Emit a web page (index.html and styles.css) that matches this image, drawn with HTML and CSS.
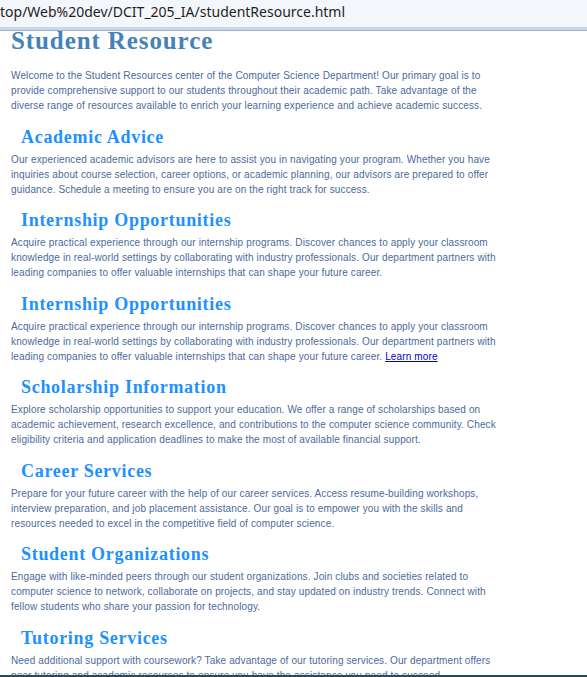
FILE: index.html
```html
<!DOCTYPE html>
<html lang="en">
<head>
<meta charset="utf-8">
<title>Student Resource</title>
<link rel="stylesheet" href="styles.css">
</head>
<body>
<div class="addressbar"><span class="url">top/Web%20dev/DCIT_205_IA/studentResource.html</span></div>
<main class="page">
  <h1 class="title">Student Resource</h1>
  <p class="text">Welcome to the Student Resources center of the Computer Science Department! Our primary goal is to provide comprehensive support to our students throughout their academic path. Take advantage of the diverse range of resources available to enrich your learning experience and achieve academic success.</p>

  <section class="block">
    <h2 class="heading">Academic Advice</h2>
    <p class="text">Our experienced academic advisors are here to assist you in navigating your program. Whether you have inquiries about course selection, career options, or academic planning, our advisors are prepared to offer guidance. Schedule a meeting to ensure you are on the right track for success.</p>
  </section>

  <section class="block">
    <h2 class="heading">Internship Opportunities</h2>
    <p class="text">Acquire practical experience through our internship programs. Discover chances to apply your classroom knowledge in real-world settings by collaborating with industry professionals. Our department partners with leading companies to offer valuable internships that can shape your future career.</p>
  </section>

  <section class="block">
    <h2 class="heading">Internship Opportunities</h2>
    <p class="text">Acquire practical experience through our internship programs. Discover chances to apply your classroom knowledge in real-world settings by collaborating with industry professionals. Our department partners with leading companies to offer valuable internships that can shape your future career. <a class="more" href="#">Learn more</a></p>
  </section>

  <section class="block">
    <h2 class="heading">Scholarship Information</h2>
    <p class="text">Explore scholarship opportunities to support your education. We offer a range of scholarships based on academic achievement, research excellence, and contributions to the computer science community. Check eligibility criteria and application deadlines to make the most of available financial support.</p>
  </section>

  <section class="block">
    <h2 class="heading">Career Services</h2>
    <p class="text">Prepare for your future career with the help of our career services. Access resume-building workshops, interview preparation, and job placement assistance. Our goal is to empower you with the skills and resources needed to excel in the competitive field of computer science.</p>
  </section>

  <section class="block">
    <h2 class="heading">Student Organizations</h2>
    <p class="text">Engage with like-minded peers through our student organizations. Join clubs and societies related to computer science to network, collaborate on projects, and stay updated on industry trends. Connect with fellow students who share your passion for technology.</p>
  </section>

  <section class="block">
    <h2 class="heading">Tutoring Services</h2>
    <p class="text">Need additional support with coursework? Take advantage of our tutoring services. Our department offers peer tutoring and academic resources to ensure you have the assistance you need to succeed.</p>
  </section>
</main>
<div class="taskbar"></div>
</body>
</html>
```
FILE: styles.css
```css
html, body {
  margin: 0;
  padding: 0;
  background: #ffffff;
}

body {
  overflow: hidden;
  height: 677px;
}

.addressbar {
  height: 27px;
  background: #f3f6fb;
  border-bottom: 3px solid #c8d7f0;
  box-shadow: 0 1px 0 #9fb0c8;
  display: flex;
  align-items: center;
}

.url {
  margin-left: 0;
  font-family: "Noto Sans", "Open Sans", sans-serif;
  font-size: 14px;
  color: #1f1f1f;
  white-space: nowrap;
  position: relative;
  top: -2px;
}

.page {
  padding: 1px 0 0 11px;
  width: 492px;
}

.title {
  margin: 0;
  font-family: "Liberation Serif", "Times New Roman", serif;
  font-weight: bold;
  font-size: 25px;
  line-height: 20px;
  letter-spacing: 0.9px;
  color: #4682b4;
}

.text {
  margin: 17px 0 0 0;
  font-family: "Liberation Sans", Arial, sans-serif;
  font-size: 10px;
  line-height: 15px;
  letter-spacing: 0.13px;
  color: #4b6a9b;
}

.block {
  margin-top: 13.5px;
}

.heading {
  margin: 0 0 0 10px;
  font-family: "Liberation Serif", "Times New Roman", serif;
  font-weight: bold;
  font-size: 18px;
  line-height: 20px;
  letter-spacing: 0.7px;
  color: #1e90ff;
}

.block .text {
  margin-top: 5px;
}

.more {
  color: #0000cc;
  text-decoration: underline;
}

.taskbar {
  position: fixed;
  left: 0;
  right: 0;
  bottom: 0;
  height: 2px;
  background: #2b4a57;
}
```
